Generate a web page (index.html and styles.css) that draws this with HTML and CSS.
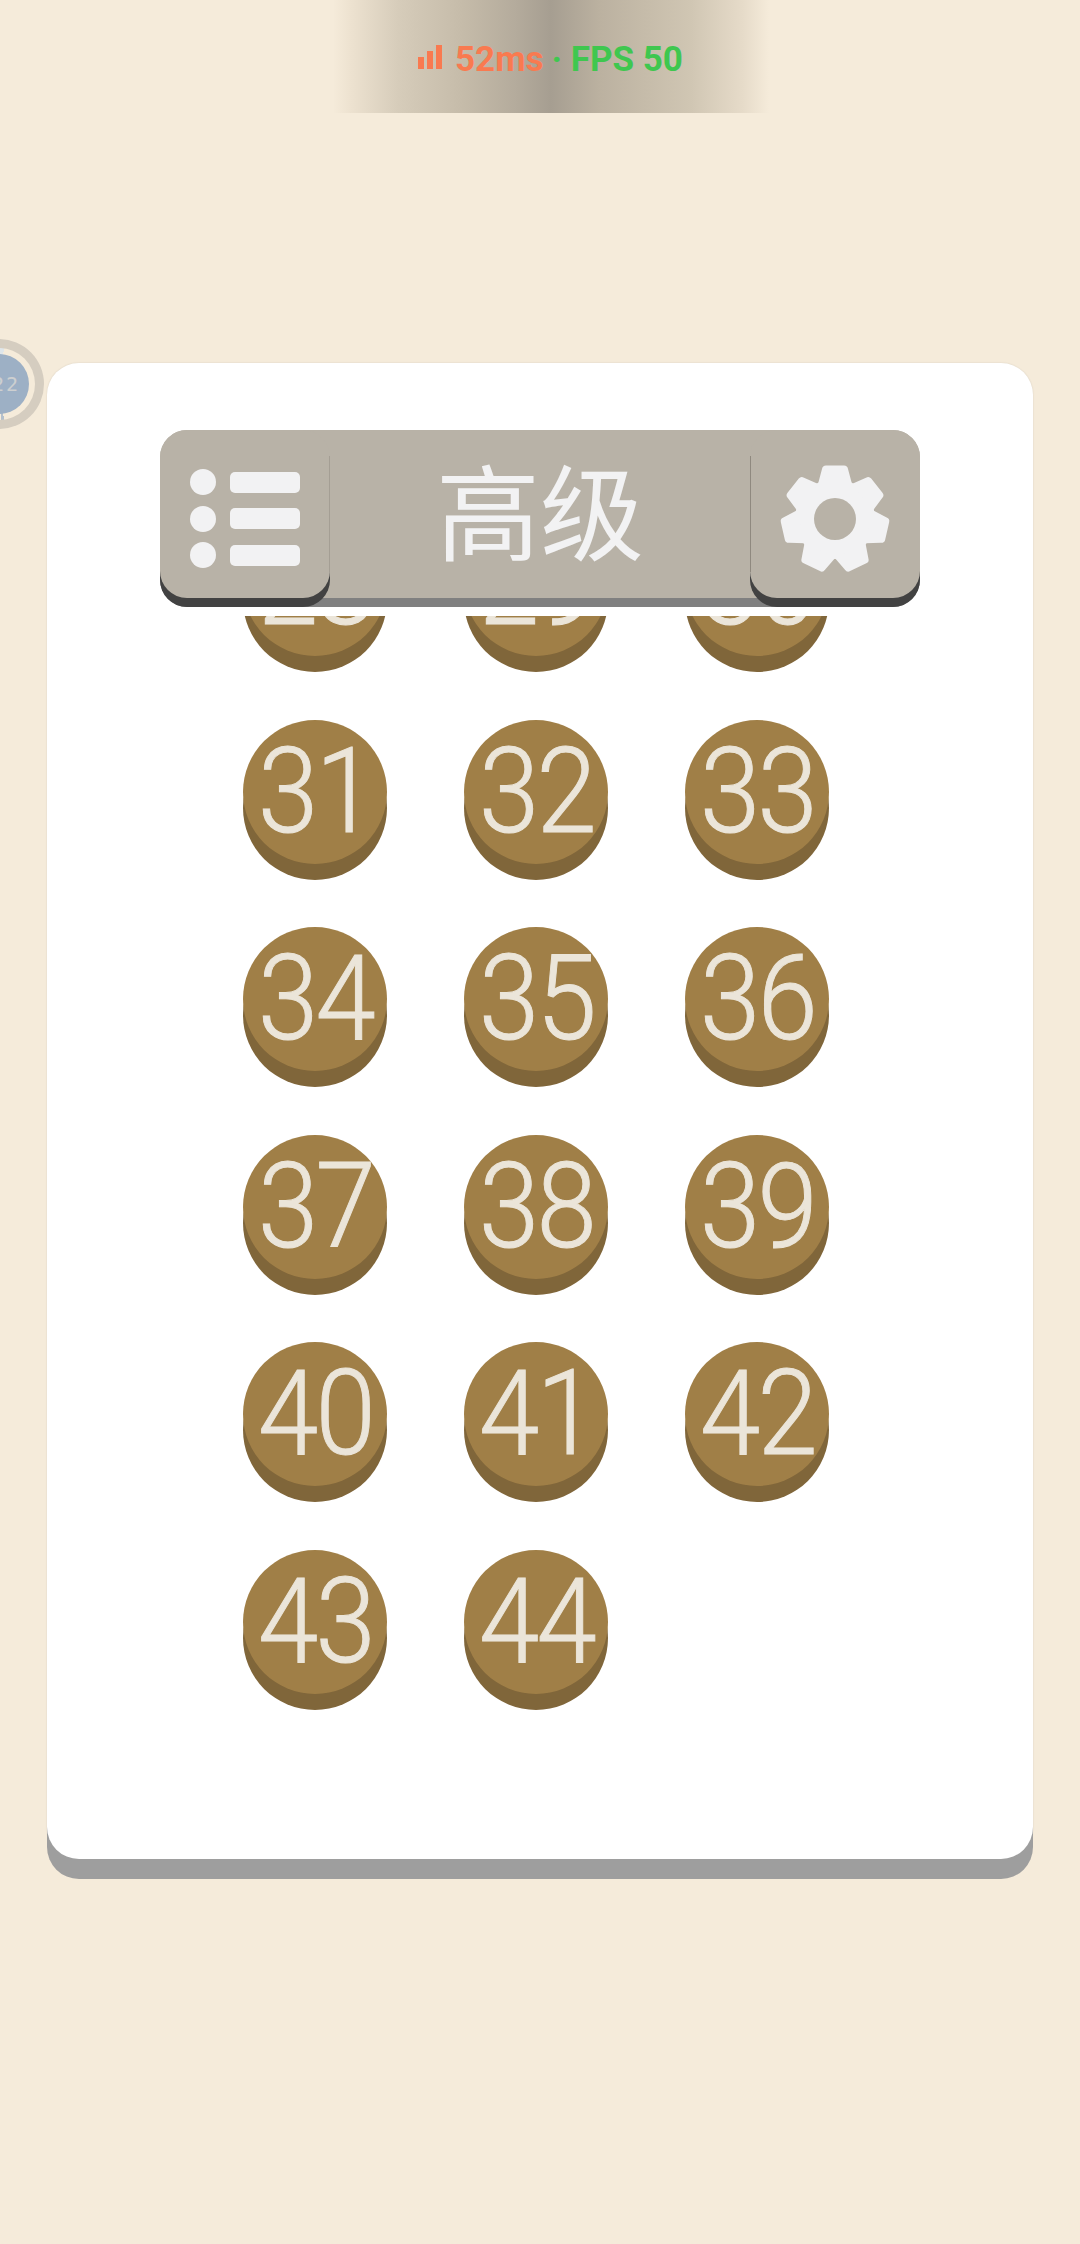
FILE: index.html
```html
<!DOCTYPE html>
<html lang="zh">
<head>
<meta charset="utf-8">
<title>高级</title>
<link rel="stylesheet" href="styles.css">
</head>
<body>
<div class="status">
  <svg class="signal" width="24" height="24" viewBox="0 0 24 24"><rect x="0" y="12" width="6" height="12"/><rect x="9" y="6" width="6" height="18"/><rect x="18" y="0" width="6" height="24"/></svg>
  <span class="ping">52ms</span><span class="fps"><span class="dot">·</span> FPS 50</span>
</div>
<div class="badge"><div class="badge-ring"><div class="badge-inner"><span class="badge-text">22</span></div></div></div>
<main class="card">
  <header class="bar">
    <div class="btn btn-left">
      <svg width="110" height="100" viewBox="0 0 110 100" class="icon"><circle cx="13" cy="13" r="13"/><circle cx="13" cy="50" r="13"/><circle cx="13" cy="86" r="13"/><rect x="40" y="3" width="70" height="21" rx="5"/><rect x="40" y="39" width="70" height="21" rx="5"/><rect x="40" y="76" width="70" height="21" rx="5"/></svg>
    </div>
    <h1 class="title">高级</h1>
    <div class="btn btn-right">
      <svg width="112" height="112" viewBox="-56 -56 112 112" class="icon">
        <defs><path id="tooth" d="M-17 -35 L-13 -50 Q-12.500 -53.500 -9 -53.500 H9 Q12.500 -53.500 13 -50 L17 -35 Z"/></defs>
        <circle r="40"/>
        <use href="#tooth"/>
        <use href="#tooth" transform="rotate(51.43)"/>
        <use href="#tooth" transform="rotate(102.86)"/>
        <use href="#tooth" transform="rotate(154.29)"/>
        <use href="#tooth" transform="rotate(205.71)"/>
        <use href="#tooth" transform="rotate(257.14)"/>
        <use href="#tooth" transform="rotate(308.57)"/>
        <circle r="21" class="hole"/>
      </svg>
    </div>
  </header>
  <div class="scroll">
    <div class="grid">
      <div class="coin"><span class="num">28</span></div><div class="coin"><span class="num">29</span></div><div class="coin"><span class="num">30</span></div>
      <div class="coin"><span class="num">31</span></div><div class="coin"><span class="num">32</span></div><div class="coin"><span class="num">33</span></div>
      <div class="coin"><span class="num">34</span></div><div class="coin"><span class="num">35</span></div><div class="coin"><span class="num">36</span></div>
      <div class="coin"><span class="num">37</span></div><div class="coin"><span class="num">38</span></div><div class="coin"><span class="num">39</span></div>
      <div class="coin"><span class="num">40</span></div><div class="coin"><span class="num">41</span></div><div class="coin"><span class="num">42</span></div>
      <div class="coin"><span class="num">43</span></div><div class="coin"><span class="num">44</span></div>
    </div>
  </div>
</main>
</body>
</html>
```
FILE: styles.css
```css
* { box-sizing: border-box; }
html, body { margin: 0; padding: 0; }
body {
  width: 1080px;
  height: 2244px;
  background: #f5ebda;
  overflow: hidden;
  position: relative;
  font-family: "Noto Sans CJK SC", sans-serif;
}
.status {
  width: 436px;
  height: 113px;
  margin-left: 333px;
  display: flex;
  align-items: center;
  padding-left: 85px;
  padding-top: 6px;
  background: linear-gradient(90deg, #f5ebda 0%, #ede2d0 4%, #d6ccba 15%, #c5bba9 30%, #b4ab9c 42%, #a69e91 50%, #bbb1a0 61%, #d0c6b3 82%, #e6dbc9 94%, #f5ebda 100%);
  font-family: Roboto, sans-serif;
  font-weight: 700;
  font-size: 35px;
  line-height: 40px;
}
.signal { fill: #f97a50; margin-right: 13px; margin-top: -6px; }
.ping { color: #f97a50; }
.fps { color: #3fc74f; margin-left: 8px; }
.badge {
  position: absolute;
  left: -46px;
  top: 339px;
  width: 90px;
  height: 90px;
  border-radius: 50%;
  background: #d5cdc0;
  display: flex;
  align-items: center;
  justify-content: center;
}
.badge-ring {
  width: 72px;
  height: 72px;
  border-radius: 50%;
  background: conic-gradient(#dfe6ea 0 8deg, #f5ebda 8deg 172deg, #b4c0cc 172deg 176deg, #f5ebda 176deg 340deg, #dfe6ea 340deg);
  display: flex;
  align-items: center;
  justify-content: center;
}
.badge-inner {
  width: 60px;
  height: 60px;
  border-radius: 50%;
  background: #9db0c5;
  display: flex;
  align-items: center;
  justify-content: center;
  padding-left: 14px;
}
.badge-text { font-family: "DejaVu Sans Mono", monospace; font-size: 20px; letter-spacing: 2px; color: #cdcfd0; }
.card {
  margin: 250px 0 0 47px;
  width: 986px;
  height: 1496px;
  background: #fff;
  border-radius: 32px;
  box-shadow: 0 20px 0 #9e9e9e, 0 0 2px rgba(0, 0, 0, 0.12);
  padding: 67px 113px 0;
  display: flex;
  flex-direction: column;
}
.bar {
  height: 168px;
  flex: none;
  display: flex;
  justify-content: space-between;
  align-items: stretch;
  border-radius: 27px;
  background: #b8b2a7;
  box-shadow: 0 9px 0 #808080;
  position: relative;
  z-index: 1;
}
.btn {
  width: 170px;
  height: 168px;
  flex: none;
  background: #b8b2a7;
  border-radius: 27px;
  box-shadow: 0 9px 0 #424242;
  display: flex;
  align-items: center;
  justify-content: center;
  position: relative;
  padding-top: 10px;
}
.btn::after {
  content: "";
  position: absolute;
  top: 26px;
  bottom: 26px;
  width: 1px;
  background: #8f897f;
}
.btn-left::after { right: 0; background: #a49e94; }
.btn-right::after { left: 0; }
.icon { fill: #f2f2f3; }
.hole { fill: #b8b2a7; }
.title {
  margin: 0;
  flex: 1;
  text-align: center;
  font-family: "Noto Sans CJK SC", sans-serif;
  font-weight: 400;
  font-size: 104px;
  line-height: 156px;
  color: #f2f2f3;
}
.scroll {
  margin: 18px -113px 0;
  height: 1100px;
  overflow: hidden;
}
.grid {
  display: grid;
  grid-template-columns: repeat(3, 144px);
  column-gap: 77px;
  row-gap: 47.5px;
  padding-left: 196px;
  margin-top: -104px;
}
.coin {
  width: 144px;
  height: 144px;
  margin-bottom: 16px;
  border-radius: 50%;
  background: #a07f47;
  box-shadow: 0 16px 0 #80663a;
  display: flex;
  justify-content: center;
}
.num {
  display: block;
  color: #ebe5d9;
  font-family: Roboto, sans-serif;
  font-weight: 300;
  font-size: 118px;
  line-height: 144px;
  letter-spacing: -3px;
  -webkit-text-stroke: 1px #ebe5d9;
  transform: scaleX(0.92);
}
```
